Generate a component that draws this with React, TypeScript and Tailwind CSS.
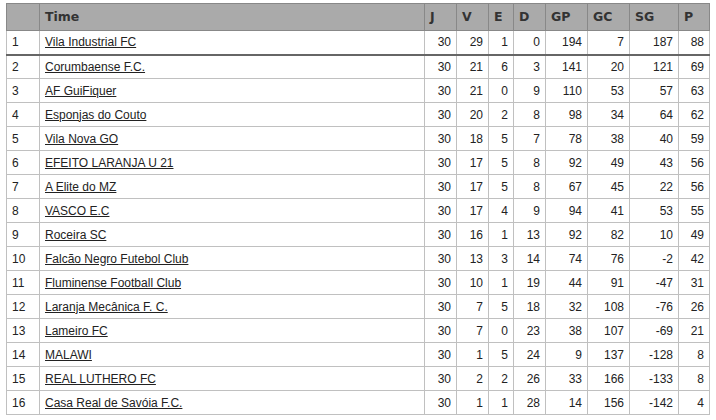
import React from 'react';

type Row = [number, string, number, number, number, number, number, number, number, number];

const rows: Row[] = [
  [1, 'Vila Industrial FC', 30, 29, 1, 0, 194, 7, 187, 88],
  [2, 'Corumbaense F.C.', 30, 21, 6, 3, 141, 20, 121, 69],
  [3, 'AF GuiFiquer', 30, 21, 0, 9, 110, 53, 57, 63],
  [4, 'Esponjas do Couto', 30, 20, 2, 8, 98, 34, 64, 62],
  [5, 'Vila Nova GO', 30, 18, 5, 7, 78, 38, 40, 59],
  [6, 'EFEITO LARANJA U 21', 30, 17, 5, 8, 92, 49, 43, 56],
  [7, 'A Elite do MZ', 30, 17, 5, 8, 67, 45, 22, 56],
  [8, 'VASCO E.C', 30, 17, 4, 9, 94, 41, 53, 55],
  [9, 'Roceira SC', 30, 16, 1, 13, 92, 82, 10, 49],
  [10, 'Falcão Negro Futebol Club', 30, 13, 3, 14, 74, 76, -2, 42],
  [11, 'Fluminense Football Club', 30, 10, 1, 19, 44, 91, -47, 31],
  [12, 'Laranja Mecânica F. C.', 30, 7, 5, 18, 32, 108, -76, 26],
  [13, 'Lameiro FC', 30, 7, 0, 23, 38, 107, -69, 21],
  [14, 'MALAWI', 30, 1, 5, 24, 9, 137, -128, 8],
  [15, 'REAL LUTHERO FC', 30, 2, 2, 26, 33, 166, -133, 8],
  [16, 'Casa Real de Savóia F.C.', 30, 1, 1, 28, 14, 156, -142, 4],
];

const headers = [
  { label: '', w: 'w-[33px]' },
  { label: 'Time', w: 'w-[385px]' },
  { label: 'J', w: 'w-[32px]' },
  { label: 'V', w: 'w-[32px]' },
  { label: 'E', w: 'w-[25px]' },
  { label: 'D', w: 'w-[32px]' },
  { label: 'GP', w: 'w-[42px]' },
  { label: 'GC', w: 'w-[42px]' },
  { label: 'SG', w: 'w-[49px]' },
  { label: 'P', w: 'w-[31px]' },
];

export default function App() {
  return (
    <div className="w-[716px] h-[420px] bg-white pt-[3px] pl-[6px] font-['Liberation_Sans',Arial,sans-serif] text-[12px] text-[#222]">
      <table className="w-[703px] table-fixed border-collapse">
        <thead>
          <tr className="h-[27px] bg-[#aaaaaa]">
            {headers.map((h, i) => (
              <th
                key={i}
                className={`${h.w} border border-[#888] px-[5px] pt-[1px] text-left font-['DejaVu_Sans',Verdana,sans-serif] text-[12.5px] font-bold text-[#333]`}
              >
                {h.label}
              </th>
            ))}
          </tr>
        </thead>
        <tbody>
          {rows.map((r, idx) => (
            <tr
              key={r[0]}
              className={`h-[24px] ${idx === 0 ? 'border-b-2 border-b-[#666]' : ''}`}
            >
              <td className="border border-[#c0c0c0] px-[5px]">{r[0]}</td>
              <td className="border border-[#c0c0c0] px-[5px]">
                <a href="#" className="underline text-[#222]">
                  {r[1]}
                </a>
              </td>
              {r.slice(2).map((v, j) => (
                <td key={j} className="border border-[#c0c0c0] px-[5px] text-right">
                  {v}
                </td>
              ))}
            </tr>
          ))}
        </tbody>
      </table>
    </div>
  );
}
